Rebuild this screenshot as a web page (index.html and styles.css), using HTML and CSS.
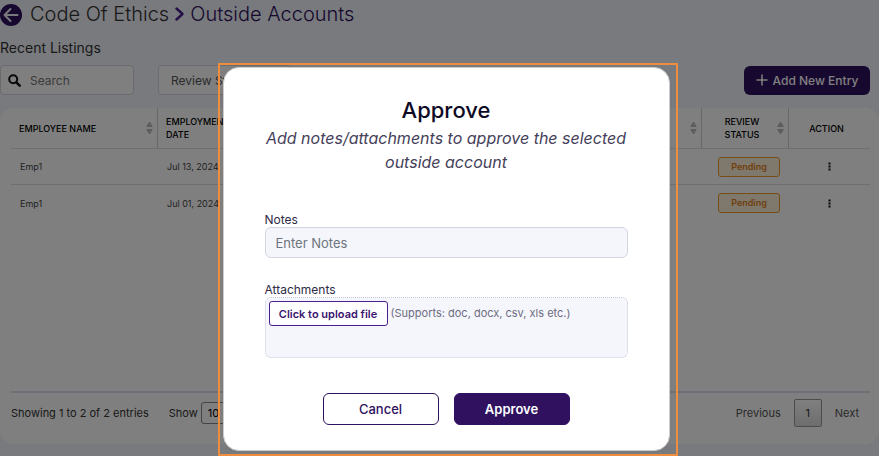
FILE: index.html
```html
<!DOCTYPE html>
<html lang="en">
<head>
  <meta charset="UTF-8" />
  <meta name="viewport" content="width=device-width, initial-scale=1" />
  <title>Outside Accounts</title>
  <link rel="stylesheet" href="styles.css">
</head>
<body>
  <!-- Breadcrumb -->
  <header class="page-header">
    <a href="#" class="back-link" aria-label="Back">
      <svg width="22" height="22" viewBox="0 0 22 22">
        <circle cx="11" cy="11" r="11" fill="#2f1160" />
        <path d="M17.5 11H5M10.5 5L4.5 11l6 6" fill="none" stroke="#f2f3fa" stroke-width="2" stroke-linecap="round" stroke-linejoin="round" />
      </svg>
    </a>
    <h1>
      <span>Code Of Ethics</span>
      <svg width="9" height="14" viewBox="0 0 9 14">
        <path d="M1.5 1.5L7.5 7l-6 5.5" fill="none" stroke="#4a1f8c" stroke-width="2.4" stroke-linecap="round" stroke-linejoin="round" />
      </svg>
      <span class="current">Outside Accounts</span>
    </h1>
  </header>

  <main>
    <h2>Recent Listings</h2>

    <!-- Search and filters -->
    <div class="toolbar">
      <div class="search-box">
        <svg width="13" height="13" viewBox="0 0 13 13">
          <circle cx="5.2" cy="5.2" r="4" fill="none" stroke="#111" stroke-width="2" />
          <path d="M8.3 8.3l3.4 3.4" stroke="#111" stroke-width="2.4" stroke-linecap="round" />
        </svg>
        <input type="text" placeholder="Search" aria-label="Search" />
      </div>
      <select class="status-filter" aria-label="Review Status">
        <option>Review Status</option>
      </select>
      <button type="button" class="add-btn">
        <svg width="12" height="12" viewBox="0 0 12 12">
          <path d="M6 0.5v11M0.5 6h11" stroke="#fff" stroke-width="1.5" />
        </svg>
        Add New Entry
      </button>
    </div>

    <!-- Accounts table -->
    <section class="card">
      <div class="table-wrap">
        <table>
          <thead>
            <tr>
              <th class="col-name"><div class="th-inner">Employee Name<span class="sort"></span></div></th>
              <th class="col-date"><div class="th-inner">Employment<br>Date<span class="sort"></span></div></th>
              <th><div class="th-inner"><span class="sort"></span></div></th>
              <th class="col-status"><div class="th-inner">Review<br>Status<span class="sort"></span></div></th>
              <th class="col-action">Action</th>
            </tr>
          </thead>
          <tbody>
            <tr>
              <td>Emp1</td>
              <td>Jul 13, 2024</td>
              <td></td>
              <td class="status-cell"><span class="badge">Pending</span></td>
              <td class="action-cell"><button type="button" class="dots" aria-label="Actions"><svg width="3" height="9" viewBox="0 0 3 9"><path d="M0.5 0.5h2v2h-2zM0.5 3.5h2v2h-2zM0.5 6.5h2v2h-2z" fill="#111" /></svg></button></td>
            </tr>
            <tr>
              <td>Emp1</td>
              <td>Jul 01, 2024</td>
              <td></td>
              <td class="status-cell"><span class="badge">Pending</span></td>
              <td class="action-cell"><button type="button" class="dots" aria-label="Actions"><svg width="3" height="9" viewBox="0 0 3 9"><path d="M0.5 0.5h2v2h-2zM0.5 3.5h2v2h-2zM0.5 6.5h2v2h-2z" fill="#111" /></svg></button></td>
            </tr>
          </tbody>
        </table>
      </div>

      <div class="table-footer">
        <span>Showing 1 to 2 of 2 entries</span>
        <label class="page-size">Show
          <select>
            <option>10</option>
          </select>
        </label>
        <nav class="pager">
          <a href="#">Previous</a>
          <a href="#" class="active">1</a>
          <a href="#">Next</a>
        </nav>
      </div>
    </section>
  </main>

  <!-- Approve dialog -->
  <div class="overlay">
    <div class="highlight">
      <form class="modal" role="dialog" aria-labelledby="modal-title">
        <h3 id="modal-title">Approve</h3>
        <p class="modal-text">Add notes/attachments to approve the selected outside account</p>

        <div class="field">
          <label for="notes">Notes</label>
          <input type="text" id="notes" placeholder="Enter Notes" />
        </div>

        <div class="field">
          <label for="upload">Attachments</label>
          <div class="drop-zone">
            <button type="button" id="upload" class="upload-btn">Click to upload file</button>
            <span>(Supports: doc, docx, csv, xls etc.)</span>
          </div>
        </div>

        <div class="modal-actions">
          <button type="button" class="cancel-btn">Cancel</button>
          <button type="submit" class="approve-btn">Approve</button>
        </div>
      </form>
    </div>
  </div>
</body>
</html>
```
FILE: styles.css
```css
* {
  box-sizing: border-box;
}

body {
  font-family: Inter, "Liberation Sans", sans-serif;
  font-size: 12px;
  margin: 0;
  background-color: #f2f4fb;
  color: #333;
}

button, input, select {
  font-family: inherit;
  margin: 0;
}

button {
  cursor: pointer;
}

svg {
  display: block;
  flex-shrink: 0;
}

h1, h2, h3, p {
  margin: 0;
}

/* Header */
.page-header {
  display: flex;
  align-items: center;
  gap: 8px;
  height: 28px;
}

.back-link {
  padding-top: 2px;
}

h1 {
  display: flex;
  align-items: center;
  gap: 6px;
  font-size: 20px;
  font-weight: 300;
  line-height: 28px;
  color: #333;
}

h1 .current {
  color: #2f1160;
}

h2 {
  margin-top: 10px;
  font-size: 14px;
  font-weight: 400;
  line-height: 20px;
}

/* Toolbar */
.toolbar {
  display: flex;
  align-items: center;
  gap: 24px;
  margin-top: 7px;
  padding-right: 9px;
}

.search-box {
  display: flex;
  align-items: center;
  gap: 9px;
  width: 134px;
  height: 30px;
  padding-left: 7px;
  background: #fff;
  border: 1px solid #d5d7e0;
  border-radius: 4px;
}

.search-box input {
  width: 90px;
  padding: 0;
  border: none;
  outline: none;
  background: none;
  font-size: 12px;
}

.search-box input::placeholder {
  color: #777;
}

.status-filter {
  appearance: none;
  width: 134px;
  height: 30px;
  padding: 0 12px;
  background: #fff;
  border: 1px solid #d5d7e0;
  border-radius: 4px;
  font-size: 12px;
  color: #555;
}

.add-btn {
  display: flex;
  align-items: center;
  justify-content: center;
  gap: 5px;
  width: 126px;
  height: 29px;
  margin-left: auto;
  padding: 0;
  border: none;
  border-radius: 6px;
  background-color: #2f1160;
  color: #fff;
  font-size: 12px;
  font-weight: 500;
}

/* Table */
.card {
  margin-top: 13px;
  padding: 0 9px 0 11px;
  background: #fff;
  border-radius: 14px;
}

.table-wrap {
  min-height: 285px;
  border-bottom: 2px solid #dfe0ee;
}

table {
  width: 100%;
  table-layout: fixed;
  border-collapse: separate;
  border-spacing: 0;
}

th {
  height: 41px;
  padding: 0 8px;
  border-right: 1px solid #d0d0d6;
  border-bottom: 1px solid #dcdce6;
  text-align: left;
  text-transform: uppercase;
  font-size: 9px;
  font-weight: 500;
  line-height: 13px;
  color: #000;
}

th:last-child {
  border-right: none;
}

td {
  height: 36px;
  padding: 0 9px;
  border-bottom: 1px solid #dcdce6;
  font-size: 9px;
  color: #444;
}

tr:last-child td {
  border-bottom: none;
}

.th-inner {
  position: relative;
}

.col-name {
  width: 147px;
}

.col-date {
  width: 160px;
}

.col-status {
  width: 87px;
  text-align: center;
}

.col-status .th-inner {
  padding-right: 6px;
}

.th-inner .sort {
  color: #bbb;
}

.col-action {
  width: 81px;
  padding: 0 14px 0 8px;
  text-align: center;
}

.status-cell {
  padding: 0 8px 0 16px;
}

.action-cell {
  text-align: center;
}

.sort {
  position: absolute;
  top: 50%;
  right: -4px;
  width: 7px;
  height: 12px;
  margin-top: -6px;
}

.sort::before, .sort::after {
  content: "";
  display: block;
  border: solid transparent;
}

.sort::before {
  border-width: 0 3px 5px;
  border-bottom-color: currentColor;
  margin-bottom: 2px;
}

.sort::after {
  border-width: 5px 3px 0;
  border-top-color: currentColor;
}

.badge {
  display: block;
  width: 62px;
  height: 20px;
  border: 1px solid #f09a2a;
  border-radius: 3px;
  background-color: #fff0db;
  color: #e07f16;
  font-size: 9px;
  font-weight: 600;
  line-height: 18px;
  text-align: center;
}

.dots {
  padding: 4px 8px;
  border: none;
  background: none;
  vertical-align: middle;
}

/* Table footer */
.table-footer {
  display: flex;
  align-items: center;
  height: 51px;
  padding-bottom: 12px;
  font-size: 11px;
}

.page-size {
  display: flex;
  align-items: center;
  gap: 3px;
  margin-left: 20px;
}

.page-size select {
  appearance: none;
  width: 48px;
  height: 22px;
  padding: 0 6px;
  border: 1px solid #888;
  border-radius: 3px;
  background: #fff;
  font-size: 11px;
}

.pager {
  display: flex;
  align-items: center;
  gap: 13px;
  margin-left: auto;
  padding-right: 11px;
}

.pager a {
  color: #555;
  text-decoration: none;
}

.pager .active {
  width: 28px;
  border: 1px solid #999;
  border-radius: 2px;
  background: linear-gradient(#fff, #dcdcdc);
  color: #333;
  line-height: 26px;
  text-align: center;
}

/* Modal */
.overlay {
  position: fixed;
  inset: 0;
  display: flex;
  justify-content: center;
  align-items: flex-start;
  padding: 63px 0 0 16px;
  background-color: rgba(0, 0, 0, 0.5);
}

.highlight {
  width: 460px;
  padding: 2px 6px 3px 3px;
  border: 2px solid #ef8d3e;
}

.modal {
  padding: 28px 41px 25px;
  background: #fff;
  border: 1px solid #ccc;
  border-radius: 16px;
}

.modal h3 {
  margin-bottom: 2px;
  font-size: 22px;
  font-weight: 500;
  line-height: 28px;
  color: #0e0a26;
  text-align: center;
}

.modal-text {
  margin-bottom: 39px;
  font-size: 16px;
  font-style: italic;
  font-weight: 400;
  line-height: 24px;
  color: #45415a;
  text-align: center;
}

.field {
  margin-bottom: 25px;
}

.field label {
  display: block;
  font-size: 12px;
  line-height: 14px;
  color: #2e2a45;
}

.field input {
  display: block;
  width: 100%;
  height: 31px;
  padding: 0 10px;
  border: 1px solid #d3d6e0;
  border-radius: 6px;
  background-color: #f5f6fc;
  font-size: 13px;
}

.field input::placeholder {
  color: #6c757d;
}

.drop-zone {
  display: flex;
  align-items: flex-start;
  gap: 3px;
  height: 61px;
  padding: 3px;
  border: 1px dotted #c8cbd8;
  border-radius: 6px;
  background-color: #f5f6fc;
  font-size: 11px;
  line-height: 24px;
  color: #6c6c80;
}

.upload-btn {
  width: 119px;
  height: 25px;
  padding: 0;
  border: 1px solid #4a1f8c;
  border-radius: 3px;
  background: #fff;
  color: #3a1670;
  font-size: 11px;
  font-weight: 600;
}

.modal-actions {
  display: flex;
  justify-content: center;
  gap: 15px;
  padding-top: 10px;
}

.modal-actions button {
  width: 116px;
  height: 32px;
  padding: 0;
  border: 1px solid #2f1160;
  border-radius: 6px;
  font-size: 13px;
  font-weight: 500;
}

.cancel-btn {
  background: #fff;
  color: #2f1160;
}

.modal-actions .approve-btn {
  background-color: #2f1160;
  color: #fff;
  font-weight: 600;
}
```
